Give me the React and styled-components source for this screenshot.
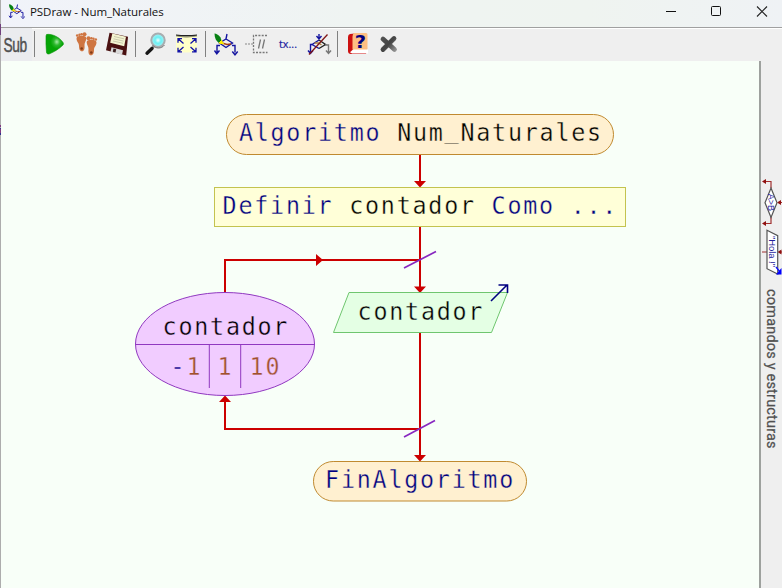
import React from "react";
import styled, { createGlobalStyle } from "styled-components";

const Global = createGlobalStyle`
  * { box-sizing: border-box; }
  body { margin: 0; overflow: hidden; background: #f8fff8; }
  svg { display: block; }
`;

const Window = styled.div`
  width: 782px;
  height: 588px;
  display: flex;
  flex-direction: column;
  padding-left: 1px;
  background:
    linear-gradient(#adadad 24px, #70407c 24px 35px, #adadad 35px 125px, #803a80 125px 127px, #adadad 127px 128px, #35358c 128px 129px, #803a80 129px 133px, #30308c 133px 135px, #adadad 135px) 0 0 / 1px 100% no-repeat,
    #f8fff8;
  overflow: hidden;
`;

const TitleBar = styled.header`
  height: 27px;
  flex: none;
  display: flex;
  align-items: flex-start;
  padding-left: 7px;
  background: linear-gradient(90deg, #f1f3fa 0%, #eff4f2 45%, #eff4f0 75%, #eff2f5 100%);
`;

const Title = styled.h1`
  flex: 1;
  margin: 0 0 0 5px;
  font: 400 11.5px/24px "Open Sans", sans-serif;
  letter-spacing: ${(p) => p.$tracking}px;
  color: #111;
`;

const WindowButton = styled.button`
  width: 46px;
  height: 24px;
  padding: 0;
  border: 0;
  background: none;
`;

const Toolbar = styled.nav`
  height: 34px;
  flex: none;
  display: flex;
  background: #efefef;
  border-top: 1px solid #a0a0a0;
  box-shadow: inset 0 1px #fff;
`;

const Tool = styled.button`
  width: 31px;
  height: 33px;
  padding: 0;
  border: 0;
  background: ${(p) => (p.$lit ? "#ebecef" : "none")};
`;

const Separator = styled.span`
  width: 1px;
  height: 26px;
  margin: 3px 5px 0 2px;
  background: #808080;
`;

const Body = styled.main`
  flex: 1;
  display: flex;
`;

const Canvas = styled.section`
  width: 758px;
  flex: none;
`;

const SidePanel = styled.aside`
  flex: 1;
  display: flex;
  flex-direction: column;
  border-left: 2px solid #9ea19e;
  background: #efefef;
`;

const SideLabel = styled.div`
  width: 20px;
  margin-top: 14px;
  writing-mode: vertical-rl;
  font: 400 14.5px/20px Roboto, sans-serif;
  letter-spacing: ${(p) => p.$tracking}px;
  color: #505050;
  -webkit-text-stroke: 0.25px #505050;
  white-space: nowrap;
`;

const NAVY = "#000080";
const RED = "#cc0000";
const NARROW = 0.92;
const ADVANCE = 15.83;

const CodeText = styled.text`
  font-family: "DejaVu Sans Mono", monospace;
  font-size: 25.4px;
  letter-spacing: ${ADVANCE / NARROW - 25.4 * 0.602}px;
  fill: ${(p) => p.$color || "#000"};
  stroke: ${(p) => p.$ground};
  stroke-width: 0.35px;
  white-space: pre;
`;

/* Condensed monospace line whose first cell starts at x on baseline y. */
function Code({ x, y, color, ground, children }) {
  return (
    <CodeText transform={`translate(${x + 0.6} ${y}) scale(${NARROW} 1)`} $color={color} $ground={ground}>
      {children}
    </CodeText>
  );
}

const Keyword = styled.tspan`
  fill: ${NAVY};
`;

const Literal = styled.tspan`
  fill: #a0522d;
`;

/* Small decision diamond with a pencil, shared by title and toolbar. */
function DrawGlyph() {
  return (
    <g fill="none" stroke="#1414a0" strokeWidth="1.4">
      <path d="M227 34l-1 5M226 39l6.500 4-6.500 4.500-6.500-4.500z" />
      <path d="M220 45.500h-3v7M232 45.500h3v7M214.500 50.500l2.300 3.300 2.700-3.300M232.300 51.500l2.700 3.300 2.700-3.300" />
      <path d="M222 43l5 1.500 4-.5" stroke="#a84010" />
      <path d="M214.500 33.500c4 .5 7 4 7 8l-2.500 1.500c-3-2-4.500-5-4.500-9.500z" fill="#078013" stroke="none" />
      <path d="M221.500 40.500l2 3.500-4.500-1z" fill="#ffee00" stroke="#ffee00" strokeWidth="1" />
    </g>
  );
}

function Foot({ flip }) {
  return (
    <g transform={flip ? "translate(173 4) scale(-1 1)" : undefined} fill="#cf7541">
      <path d="M76.500 38.500c0-2 2-2.800 4.500-2.800s5.500 0 5.300 3c-.3 3-2 3.500-1.800 6.500.3 3.500-.2 6-2.500 6s-3-2.500-3-5.500-2.500-4-2.500-7.200z" />
      <circle cx="77.200" cy="35.500" r="1.300" />
      <circle cx="79.500" cy="34.700" r="1.200" />
      <circle cx="81.600" cy="34.200" r="1.300" />
      <circle cx="84.500" cy="34.300" r="2" />
      <circle cx="81.700" cy="48.500" r="1.300" fill="#823b17" />
    </g>
  );
}

function ToolIcon({ x, lit, children }) {
  return (
    <Tool $lit={lit}>
      <svg width="31" height="33" viewBox={`${x} 28 31 33`}>{children}</svg>
    </Tool>
  );
}

function Tools() {
  return (
    <Toolbar>
      <ToolIcon x={1} lit>
        <text transform="translate(3.500 51.500) scale(.67 1)" fontFamily="Liberation Sans, sans-serif" fontSize="20.500" letterSpacing="-.6" fill="#505050" stroke="#505050" strokeWidth=".5">Sub</text>
      </ToolIcon>
      <Separator />
      <ToolIcon x={40}>
        <defs>
          <radialGradient id="play" cx=".62" cy=".38" r=".35">
            <stop offset="0" stopColor="#a4eda4" />
            <stop offset=".5" stopColor="#2eb82e" />
            <stop offset="1" stopColor="#05a505" />
          </radialGradient>
        </defs>
        <path d="M46.500 34.500c6-1 13 3 16.500 8q1 1.500 0 2.500c-4 4-9 7-14 9q-2 .5-2.500-1.500-.8-9-.5-16.500z" fill="url(#play)" stroke="#079207" strokeWidth=".6" />
      </ToolIcon>
      <ToolIcon x={71}>
        <Foot />
        <Foot flip />
      </ToolIcon>
      <ToolIcon x={102}>
        <path d="M109.500 32.800l18.500 4-1.800 18.700-20.200-5.300z" fill="#4a1010" />
        <path d="M112.300 33.600l13.700 3.200-1.800 9.400-14-3.500z" fill="#f4f4d0" />
        <path d="M114 36.500l10 2.300M113.500 38.800l10 2.300M113 41l10 2.300" stroke="#b9b99d" strokeWidth=".7" />
        <path d="M111.500 47.300l11.500 3-1 4.500-11.500-3z" fill="#d8d8d8" />
        <path d="M113.500 48.500l2.700.7-.7 3.200-2.700-.7z" fill="#3a2020" />
      </ToolIcon>
      <Separator />
      <ToolIcon x={141}>
        <defs>
          <radialGradient id="lens">
            <stop offset="0" stopColor="#f0ffff" />
            <stop offset=".45" stopColor="#6cf0f4" />
            <stop offset="1" stopColor="#a9f2f5" />
          </radialGradient>
        </defs>
        <path d="M154 46l-3 3" stroke="#909090" strokeWidth="2.500" />
        <path d="M152 48.500l-5 4.700" stroke="#171717" strokeWidth="3.400" strokeLinecap="round" />
        <circle cx="158" cy="40.300" r="6.700" fill="url(#lens)" stroke="#a8adb0" strokeWidth="2" />
        <path d="M152.500 45a7.500 7.500 0 0 0 12 0" fill="none" stroke="#777" strokeWidth="1" />
      </ToolIcon>
      <ToolIcon x={172}>
        <path d="M176 35h21v16q-10 3-21 0z" fill="#ffffc8" />
        <path d="M176 34.500q10.500 1 21 0v1.200q-10.500 1.800-21 0z" fill="#222" />
        <path d="M176 36q10.500 2.500 21 0" fill="none" stroke="#8c8c70" strokeWidth=".8" />
        <g stroke="#1212a8" strokeWidth="1.300" fill="none">
          <path d="M183.500 43.500l-5-4.500M182 38.700h-4v4M190.500 43.500l5-4.500M192 38.700h4v4M183.500 47l-5 4.500M182 51.800h-4v-4M190.500 47l5 4.500M192 51.800h4v-4" />
        </g>
      </ToolIcon>
      <Separator />
      <ToolIcon x={211}><DrawGlyph /></ToolIcon>
      <ToolIcon x={242}>
        <path d="M267 35.500h-13.500v17h14" fill="none" stroke="#777" strokeWidth="1.300" strokeDasharray="2 1.300" />
        <path d="M245 44h8" stroke="#888" strokeWidth="1.200" strokeDasharray="2 1" />
        <path d="M260.500 39.500l-2 9M264.500 39.500l-2 9" stroke="#777" strokeWidth="1.300" />
      </ToolIcon>
      <ToolIcon x={273}>
        <text x="279" y="47.500" fontFamily="Open Sans, sans-serif" fontSize="11.500" fill="#2020a0" stroke="#2020a0" strokeWidth=".2" textLength="18" lengthAdjust="spacingAndGlyphs">tx...</text>
      </ToolIcon>
      <ToolIcon x={304}>
        <g fill="none" stroke="#1414a0" strokeWidth="1.400">
          <path d="M319 34v5M316.500 36l2.500 3 2.500-3M319 40l-7 4.500h-1.500v8M308 50.500l2.500 3 2.500-3" />
          <path d="M312 44.500l7 4" />
          <path d="M319 40l6.500 4.500-6.500 4" stroke="#222" />
          <path d="M325 45h3.500v8M326 50.500l2.500 3 2.500-3" stroke="#777" />
          <path d="M314.500 43h4l3 2" stroke="#a88040" />
          <path d="M309 54.500l18.500-20" stroke="#801515" strokeWidth="1.300" />
        </g>
      </ToolIcon>
      <Separator />
      <ToolIcon x={343}>
        <path d="M350 34q-2 .3-2 3v14q0 3 3 3h15l1-4-12-1.500V33.500z" fill="#cc1010" />
        <path d="M350 52.300l3.500-3.300h14.500v4.500h-16z" fill="#fff" />
        <path d="M354 33h12q1.500 0 1.500 1.500v15h-15v-13q0-2.500 1.500-3.500z" fill="#fdbf83" />
        <text transform="translate(354.800 48) scale(1.080 1)" fontFamily="DejaVu Sans, sans-serif" fontWeight="700" fontSize="18" fill={NAVY}>?</text>
      </ToolIcon>
      <ToolIcon x={374}>
        <defs>
          <linearGradient id="cross" gradientUnits="userSpaceOnUse" x1="380" y1="36" x2="398" y2="52">
            <stop offset="0" stopColor="#555" />
            <stop offset=".5" stopColor="#444" />
            <stop offset="1" stopColor="#aaa" />
          </linearGradient>
        </defs>
        <path d="M383 39l11.500 10.500M394 38.500l-11 11" stroke="url(#cross)" strokeWidth="4.800" strokeLinecap="round" />
      </ToolIcon>
    </Toolbar>
  );
}

function Flowchart() {
  return (
    <svg width="758" height="527" viewBox="1 61 758 527">
      <g fill="none" stroke={RED} strokeWidth="2">
        <path d="M420 155v27M420 227v61M420 333v124" />
        <path d="M225 293v-33h195M420 429H225v-30" />
      </g>
      <g fill={RED}>
        <path d="M414 181h12l-6 6.500zM414 286.500h12l-6 6.500zM414 455h12l-6 6.500z" />
        <path d="M316 254v12l7-6zM219 402h12l-6-6.500z" />
      </g>

      <rect x="226.500" y="114.500" width="387" height="40" rx="20" fill="#fff0d0" stroke="#c08a30" />
      <Code x={238.300} y={141.300} ground="#fff0d0">
        <Keyword>Algoritmo</Keyword> Num<tspan dy="-3.500">_</tspan><tspan dy="3.500">Naturales</tspan>
      </Code>

      <rect x="214.500" y="187.500" width="411" height="39" fill="#ffffd8" stroke="#c3c34f" />
      <Code x={222} y={214.300} ground="#ffffd8"><Keyword>Definir</Keyword> contador <Keyword>Como ...</Keyword></Code>

      <ellipse cx="225" cy="344" rx="89.500" ry="51.500" fill="#f1ccff" stroke="#9038c0" />
      <path d="M135.500 344.500h179M209.300 344.500v43.500M240.700 344.500v43.500" stroke="#9038c0" />
      <Code x={162} y={335.300} ground="#f1ccff">contador</Code>
      <Code x={170} y={374.500} ground="#f1ccff"><Keyword>-</Keyword><Literal>1</Literal></Code>
      <Code x={217} y={374.500} ground="#f1ccff" color="#a0522d">1</Code>
      <Code x={249} y={374.500} ground="#f1ccff" color="#a0522d">10</Code>

      <path d="M349 292.500h158.500l-16 40H333.500z" fill="#e4ffe4" stroke="#6fc66f" />
      <Code x={357} y={319.500} ground="#e4ffe4">contador</Code>
      <path d="M491 301l16-16M498.500 285h9v8" fill="none" stroke={NAVY} strokeWidth="1.600" />

      <path d="M404 268l32-16.500M404 437l31-16.500" stroke="#8828c0" strokeWidth="1.700" />

      <rect x="313.500" y="461.500" width="213" height="39.500" rx="19.700" fill="#fff0d0" stroke="#c08a30" />
      <Code x={324.500} y={488.300} ground="#fff0d0"><Keyword>FinAlgoritmo</Keyword></Code>
    </svg>
  );
}

function Structures() {
  return (
    <svg width="21" height="214" viewBox="761 61 21 214">
      <g fill="none" stroke="#a03030" strokeWidth="1.200">
        <path d="M771 188v-6.500h-6M771 217v6.500h-6M778 202.500h4M762 252h5M779 252h3" />
      </g>
      <path d="M762 181.500l4-2.500v5zM762 223.500l4-2.500v5zM777 202.500l4-2.500v5zM777.500 252l4-2.500v5z" fill="#901010" />
      <path d="M771 188l6 14.700-6 14.800-6-14.800zM767 230.300l10.700 5.400v38.300l-10.700-5.300z" fill="#fff" stroke="#555" strokeWidth="1.200" />
      <g fill="#20209a" fontFamily="Liberation Sans, sans-serif">
        <text transform="translate(768 193.800) rotate(90)" fontSize="9">A&gt;B</text>
        <text transform="translate(769 236) rotate(90)" fontSize="9.500" textLength="31">"Hola !"</text>
      </g>
      <path d="M776 267l4 5" stroke="#1010ff" strokeWidth="1.300" />
      <path d="M781.500 268v6.500h-5.500z" fill="#0000ff" />
    </svg>
  );
}

export default function App() {
  return (
    <>
      <Global />
      <Window>
        <TitleBar>
          <svg width="17" height="24" viewBox="213 27.500 25 35"><DrawGlyph /></svg>
          <Title $tracking={-0.05}>PSDraw - Num_Naturales</Title>
          <WindowButton aria-label="Minimizar">
            <svg width="46" height="24"><path d="M22 11.500h10" stroke="#111" /></svg>
          </WindowButton>
          <WindowButton aria-label="Maximizar">
            <svg width="46" height="24"><rect x="21.500" y="6.500" width="9" height="9" rx="1" fill="none" stroke="#111" /></svg>
          </WindowButton>
          <WindowButton aria-label="Cerrar">
            <svg width="46" height="24"><path d="M21 6.500l10 10M31 6.500l-10 10" stroke="#222" strokeWidth="1.100" /></svg>
          </WindowButton>
        </TitleBar>
        <Tools />
        <Body>
          <Canvas><Flowchart /></Canvas>
          <SidePanel>
            <Structures />
            <SideLabel $tracking={0.19}>comandos y estructuras</SideLabel>
          </SidePanel>
        </Body>
      </Window>
    </>
  );
}
